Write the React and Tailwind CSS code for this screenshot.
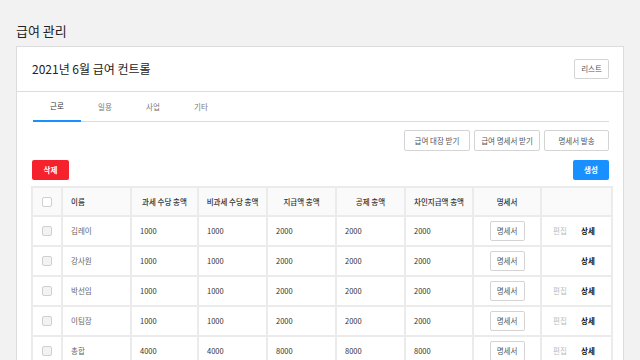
import React from "react";

const rows = [
	{ name: "김레이", tax: 1000, free: 1000, pay: 2000, ded: 2000, net: 2000, edit: true },
	{ name: "강사원", tax: 1000, free: 1000, pay: 2000, ded: 2000, net: 2000, edit: false },
	{ name: "박선임", tax: 1000, free: 1000, pay: 2000, ded: 2000, net: 2000, edit: true },
	{ name: "이팀장", tax: 1000, free: 1000, pay: 2000, ded: 2000, net: 2000, edit: true },
	{ name: "총합", tax: 4000, free: 4000, pay: 8000, ded: 8000, net: 8000, edit: true }
];

const tabs = ["근로", "일용", "사업", "기타"];

const Checkbox = ({ header }) => (
	<div
		className={`w-[10px] h-[10px] rounded-[2px] border border-[#cfcfcf] mx-auto ${
			header ? "bg-white" : "bg-[#f3f3f3]"
		}`}
	/>
);

const App = () => {
	const th = "border-2 border-[#ebebeb] font-medium text-[#333] text-center";
	const td = "border-2 border-[#ebebeb] text-left pl-[8px] text-[#333]";

	return (
		<div
			className="min-h-screen w-full bg-[#f2f2f2] pt-[21px] px-4"
			style={{ fontFamily: '"Noto Sans CJK KR", "Noto Sans", sans-serif' }}>
			<h1 className="text-[13px] leading-[20px] text-[#222] mb-[5px]">급여 관리</h1>

			<div className="bg-white border border-[#dcdcdc]">
				<div className="h-[45px] px-4 flex items-center justify-between border-b border-[#dcdcdc]">
					<p className="text-[12px] text-[#222] -ml-px">2021년 6월 급여 컨트롤</p>
					<button className="h-[20px] w-[35px] mr-[-2px] border border-[#d4d4d4] rounded-[2px] text-[7.5px] text-[#555] bg-white">
						리스트
					</button>
				</div>

				<div className="pl-4 pr-[14px]">
					<div className="flex h-[30px] border-b border-[#dcdcdc]">
						{tabs.map((tab, i) => (
							<div
								key={tab}
								className={`w-[48px] flex items-center justify-center text-[7.5px] ${
									i === 0
										? "border-b-2 border-[#1890ff] -mb-px text-[#333]"
										: "text-[#777]"
								}`}>
								{tab}
							</div>
						))}
					</div>

					<div className="flex justify-end gap-[4px] mt-[8px]">
						<button className="h-[21px] w-[66px] border border-[#d4d4d4] rounded-[2px] text-[7.5px] text-[#555]">
							급여 대장 받기
						</button>
						<button className="h-[21px] w-[66px] border border-[#d4d4d4] rounded-[2px] text-[7.5px] text-[#555]">
							급여 명세서 받기
						</button>
						<button className="h-[21px] w-[65px] border border-[#d4d4d4] rounded-[2px] text-[7.5px] text-[#555]">
							명세서 발송
						</button>
					</div>

					<div className="flex justify-between items-center mt-[9px] -ml-px">
						<button className="h-[20px] w-[37px] bg-[#f5222d] rounded-[2px] text-white text-[7.5px] font-bold">
							삭제
						</button>
						<button className="h-[20px] w-[36px] bg-[#1890ff] rounded-[2px] text-white text-[7.5px] font-bold">
							생성
						</button>
					</div>

					<table className="mt-[6px] -ml-[2px] w-[580px] border-collapse table-fixed text-[7.5px]">
						<colgroup>
							<col style={{ width: "30px" }} />
							<col style={{ width: "69px" }} />
							<col style={{ width: "67px" }} />
							<col style={{ width: "69px" }} />
							<col style={{ width: "69px" }} />
							<col style={{ width: "69px" }} />
							<col style={{ width: "68px" }} />
							<col style={{ width: "68px" }} />
							<col style={{ width: "71px" }} />
						</colgroup>
						<thead>
							<tr className="h-[29px] bg-[#fafafa]">
								<th className={th}>
									<Checkbox header />
								</th>
								<th className={`${th} !text-left pl-[8px]`}>이름</th>
								<th className={th}>과세 수당 총액</th>
								<th className={th}>비과세 수당 총액</th>
								<th className={th}>지급액 총액</th>
								<th className={th}>공제 총액</th>
								<th className={th}>차인지급액 총액</th>
								<th className={th}>명세서</th>
								<th className={th}></th>
							</tr>
						</thead>
						<tbody>
							{rows.map((row) => (
								<tr key={row.name} className="h-[30px]">
									<td className="border-2 border-[#ebebeb]">
										<Checkbox />
									</td>
									<td className={`${td} !text-[#666]`}>{row.name}</td>
									<td className={td}>{row.tax}</td>
									<td className={td}>{row.free}</td>
									<td className={td}>{row.pay}</td>
									<td className={td}>{row.ded}</td>
									<td className={td}>{row.net}</td>
									<td className="border-2 border-[#ebebeb] text-center">
										<button className="h-[20px] w-[35px] border border-[#d4d4d4] rounded-[2px] text-[7.5px] text-[#555] bg-white">
											명세서
										</button>
									</td>
									<td className="border-2 border-[#ebebeb]">
										<div className="flex items-center pl-[11px]">
											<span className="w-[28px] text-[#bbb]">{row.edit ? "편집" : ""}</span>
											<span className="font-bold text-[#111]">상세</span>
										</div>
									</td>
								</tr>
							))}
						</tbody>
					</table>
				</div>
			</div>
		</div>
	);
};

export default App;
